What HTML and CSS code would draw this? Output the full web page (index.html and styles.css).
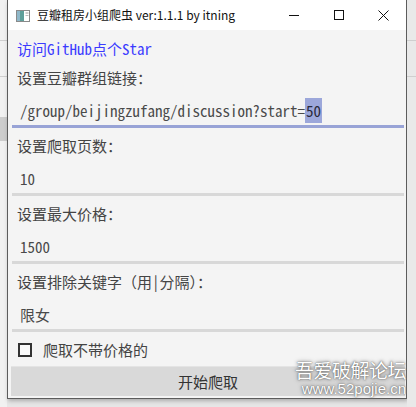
FILE: index.html
```html
<!DOCTYPE html>
<html lang="zh">
<head>
<meta charset="utf-8">
<title>豆瓣租房小组爬虫</title>
<link rel="stylesheet" href="styles.css">
</head>
<body>
<div class="desk">
  <div class="side side-left">
    <span class="sl-line l1"></span>
    <span class="sl-line l2"></span>
    <span class="sl-block"></span>
  </div>
  <div class="window">
    <div class="titlebar">
      <svg class="app-icon" width="14" height="12" viewBox="0 0 14 12">
        <rect x="0.5" y="0.5" width="13" height="11" fill="#fff" stroke="#8a8a8a"/>
        <rect x="1" y="1" width="7" height="10" fill="#5e9f9a"/>
        <rect x="1" y="1" width="3" height="10" fill="#8fb8c9"/>
        <line x1="9.5" y1="3" x2="12.5" y2="3" stroke="#9a9a9a"/>
        <line x1="9.5" y1="5.5" x2="12.5" y2="5.5" stroke="#bbb"/>
      </svg>
      <span class="title">豆瓣租房小组爬虫 ver:1.1.1 by itning</span>
      <div class="controls">
        <span class="ctl"><svg width="10" height="10" viewBox="0 0 10 10"><line x1="0" y1="5.5" x2="10" y2="5.5" stroke="#111" stroke-width="1"/></svg></span>
        <span class="ctl"><svg width="10" height="10" viewBox="0 0 10 10"><rect x="0.5" y="0.5" width="9" height="9" fill="none" stroke="#111" stroke-width="1"/></svg></span>
        <span class="ctl"><svg width="11" height="11" viewBox="0 0 11 11"><path d="M0.5 0.5 L10.5 10.5 M10.5 0.5 L0.5 10.5" stroke="#111" stroke-width="1"/></svg></span>
      </div>
    </div>
    <div class="content">
      <div class="link">访问GitHub点个Star</div>
      <div class="label">设置豆瓣群组链接：</div>
      <div class="input focus">/group/beijingzufang/discussion?start=<span class="sel">50</span></div>
      <div class="label">设置爬取页数：</div>
      <div class="input">10</div>
      <div class="label">设置最大价格：</div>
      <div class="input">1500</div>
      <div class="label">设置排除关键字（用|分隔）：</div>
      <div class="input">限女</div>
      <div class="check-row">
        <span class="box"></span>
        <span class="check-label">爬取不带价格的</span>
      </div>
      <div class="button">开始爬取</div>
    </div>
    <div class="watermark">
      <div class="wm-cn">吾爱破解论坛</div>
      <div class="wm-url">www.52pojie.cn</div>
    </div>
  </div>
  <div class="side side-right">
    <span class="sr-line r1"></span>
    <span class="sr-line r2"></span>
  </div>
</div>
</body>
</html>
```

FILE: styles.css
```css
* { box-sizing: border-box; }
html, body { margin: 0; padding: 0; }
body {
  width: 416px;
  height: 407px;
  overflow: hidden;
  background: #e6e6e6;
  font-family: "Noto Sans Mono CJK SC", "Noto Sans CJK SC", monospace;
}
.desk {
  display: flex;
  height: 407px;
}
.side {
  position: relative;
  background: #f1f1f1;
}
.side-left { width: 7px; }
.side-right { width: 9px; background: #e9e9e9; }
.sl-line, .sr-line {
  position: absolute;
  left: 0;
  right: 0;
  height: 1px;
  background: #cfcfcf;
}
.l1 { top: 40px; }
.l2 { top: 76px; }
.r1 { top: 40px; }
.r2 { top: 76px; }
.sl-block {
  position: absolute;
  left: 0;
  right: 0;
  top: 117px;
  height: 24px;
  background: #cdcdcd;
}
.window {
  position: relative;
  width: 401px;
  height: 399px;
  border-left: 1px solid #5c5c5c;
  border-right: 1px solid #5c5c5c;
  border-bottom: 1px solid #5c5c5c;
  background: #f4f4f4;
  display: flex;
  flex-direction: column;
  box-shadow: 1px 2px 4px rgba(0,0,0,0.25);
}
.titlebar {
  height: 30px;
  background: #ffffff;
  display: flex;
  align-items: center;
  padding-left: 8px;
}
.app-icon { margin-top: 1px; }
.title {
  margin-left: 7px;
  font-family: "Noto Sans CJK SC", sans-serif;
  font-size: 12px;
  color: #111;
  line-height: 30px;
}
.controls {
  margin-left: auto;
  display: flex;
  height: 30px;
}
.ctl {
  width: 45px;
  display: flex;
  align-items: center;
  justify-content: center;
}
.content {
  flex: 1;
  display: flex;
  flex-direction: column;
  padding: 8px 2px 0 4px;
  font-size: 15px;
  color: #444;
}
.link {
  height: 22px;
  line-height: 22px;
  padding-left: 5px;
  color: #3b3bff;
}
.label {
  height: 22px;
  line-height: 22px;
  padding-left: 5px;
  margin-top: 7px;
}
.input {
  margin-top: 7px;
  height: 32px;
  line-height: 29px;
  padding-left: 8px;
  border-bottom: 3px solid #d8d8d8;
  color: #4a4a4a;
}
.input.focus { border-bottom-color: #98a3d6; }
.sel {
  background: #9ca7da;
  color: #2a2a3a;
  padding: 2px 1px;
}
.check-row {
  margin-top: 7px;
  height: 22px;
  display: flex;
  align-items: center;
  padding-left: 6px;
}
.box {
  width: 14px;
  height: 14px;
  border: 2px solid #333;
  background: #fbfbfb;
}
.check-label {
  margin-left: 11px;
  line-height: 22px;
}
.button {
  margin: 5px -1px 0 -1px;
  height: 30px;
  line-height: 30px;
  text-align: center;
  background: #d9d9d9;
  border-top: 1px solid #e4e4e4;
  color: #333;
}
.watermark {
  position: absolute;
  right: 0;
  bottom: 0;
  width: 112px;
  display: flex;
  flex-direction: column;
  align-items: flex-end;
  color: #ffffff;
  text-shadow: 0 0 1px #5a5a5a, 0 0 3px #7a7a7a, 0 0 5px #9a9a9a;
  font-family: "Noto Sans CJK SC", sans-serif;
}
.wm-cn {
  font-size: 19px;
  line-height: 21px;
  letter-spacing: -0.5px;
}
.wm-url {
  font-size: 15px;
  line-height: 18px;
  font-family: "Liberation Sans", "Noto Sans", sans-serif;
}
```
